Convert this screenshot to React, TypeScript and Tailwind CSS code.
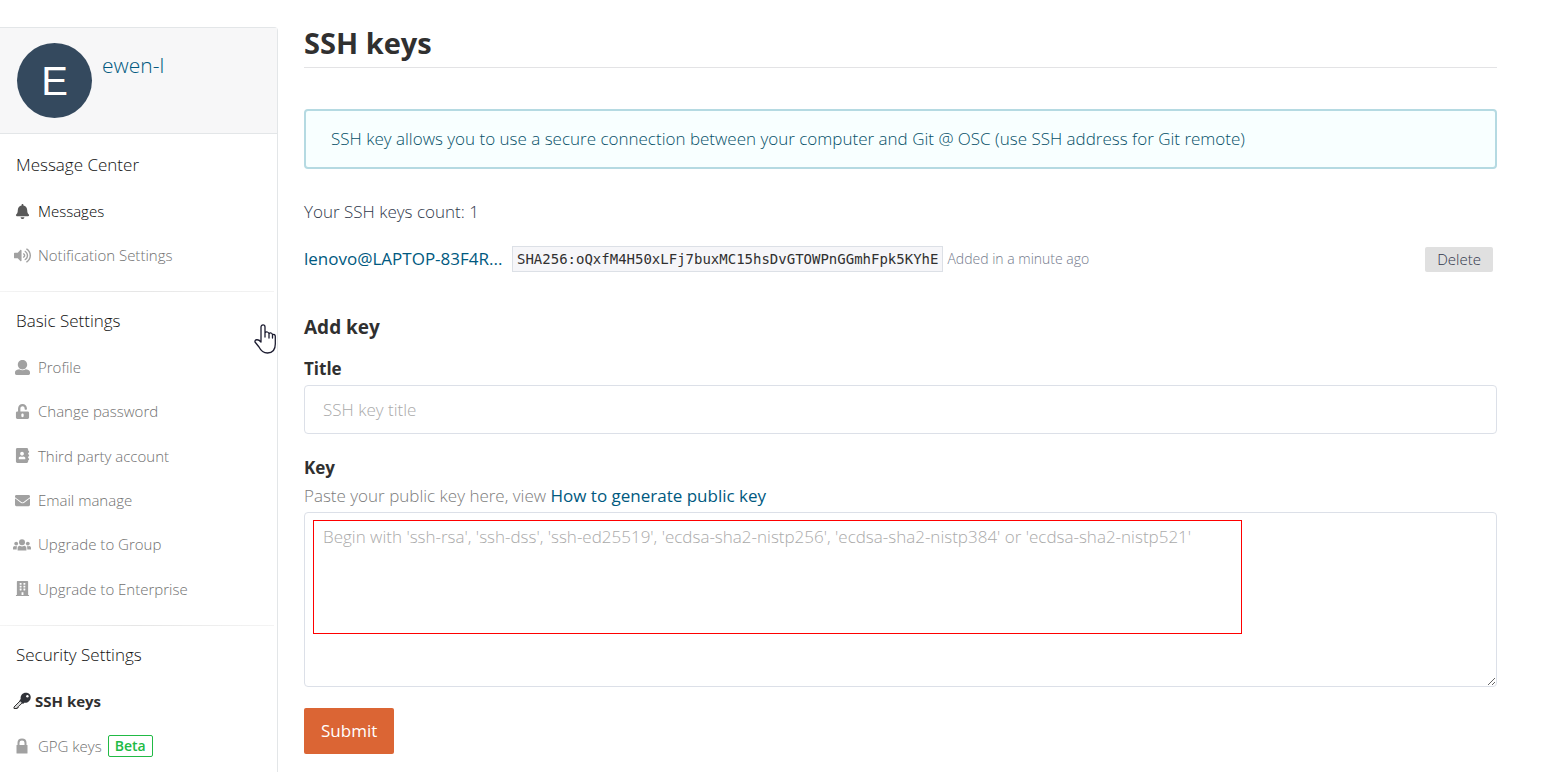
import { ReactNode } from "react";
import { FaAddressBook, FaBell, FaBuilding, FaEnvelope, FaUnlockAlt, FaVolumeUp } from "react-icons/fa";

const UserIcon = () => (
  <svg viewBox="0 0 512 512" fill="currentColor" className="size-[15px]">
    <path d="M256 0c88.366 0 160 71.634 160 160s-71.634 160-160 160S96 248.366 96 160 167.634 0 256 0zm183.283 333.821l-71.313-17.828c-74.923 53.89-165.738 41.864-223.94 0l-71.313 17.828C29.981 344.505 0 382.903 0 426.955V464c0 26.51 21.49 48 48 48h416c26.51 0 48-21.49 48-48v-37.045c0-44.052-29.981-82.45-72.717-93.134z" />
  </svg>
);

const GroupIcon = () => (
  <svg viewBox="0 0 18 12" fill="currentColor" className="h-3 w-[18px] shrink-0">
    <circle cx="9" cy="3.2" r="3" />
    <circle cx="3.2" cy="4.6" r="1.9" />
    <circle cx="14.8" cy="4.6" r="1.9" />
    <path d="M4.6 11.500V9.300C4.600 7.900 5.500 7.100 6.900 6.800C8.200 7.600 9.800 7.600 11.100 6.800C12.500 7.100 13.400 7.900 13.400 9.300V11.500Z" />
    <path d="M0 10.400V8.800C0 7.700 .7 7.100 1.800 6.900C2.500 7.300 3.400 7.300 4.200 6.900C3.900 7.500 3.700 8.300 3.700 10.400ZM18 10.400V8.800C18 7.700 17.300 7.100 16.200 6.900C15.500 7.300 14.600 7.300 13.800 6.900C14.100 7.500 14.300 8.300 14.300 10.400Z" />
  </svg>
);

const LockIcon = () => (
  <svg viewBox="0 0 12 16" className="h-4 w-3">
    <path d="M2.500 8V4.800C2.500 .3 9.500 .3 9.500 4.800V8" fill="none" stroke="currentColor" strokeWidth="2" />
    <rect x="0.500" y="7" width="11" height="8.500" rx="0.500" fill="currentColor" />
  </svg>
);

const KeyIcon = () => (
  <svg viewBox="0 0 18 18" className="size-[18px]">
    <path d="M1 16.500V15L8.200 7.800L10.300 9.900L5.500 14.500V15.300H4.300V16.500Z" fill="#d8d8d8" stroke="#333" strokeWidth="1" />
    <path d="M7.700 7C7.200 3.500 9.500 .8 13 .8C16 .8 17.900 3 17.700 5.500C17.400 9 14.500 11.200 11.300 10.700L10 12L6.400 8.400Z" fill="#303238" />
    <circle cx="14.400" cy="4.200" r="1.200" fill="#fff" />
  </svg>
);

function Item({ icon, label, className = "text-[#707070]" }: { icon: ReactNode; label: string; className?: string }) {
  return (
    <a href="#" className={`flex h-5 items-center gap-[7px] text-[15px] ${className}`}>
      <span className="flex w-[18px] justify-center opacity-65">{icon}</span>
      {label}
    </a>
  );
}

const Divider = () => <div className="mr-[3px] h-px bg-linear-to-r from-[#f4f4f4] via-[#e6e6e6] to-[#f4f4f4]" />;

export default function App() {
  return (
    <div className="flex h-screen overflow-hidden bg-white font-['Open_Sans','Noto_Sans',sans-serif] text-[17px] font-light text-[#30384b]">
      <aside className="relative mt-[27px] w-[278px] shrink-0 rounded-tr-sm border-t border-r border-[#e3e6e8]">
        <header className="flex h-[106px] gap-2.5 border-b border-[#e3e6e8] bg-[#f7f7f8] px-[17px] pt-[15px]">
          <div className="flex size-[75px] items-center justify-center rounded-full bg-[#34495e] font-['Liberation_Sans',sans-serif] text-[40px] font-normal text-white">E</div>
          <a href="#" className="pt-2 text-[21px] leading-7 text-[#005980]">ewen-l</a>
        </header>
        <nav>
          <section className="px-[13px] pt-[19px] pb-[26px]">
            <h2 className="mb-6 pl-[3px] leading-6 text-[#111]">Message Center</h2>
            <div className="flex flex-col gap-6">
              <Item icon={<FaBell size={15} />} label="Messages" className="text-black" />
              <Item icon={<FaVolumeUp size={17} />} label="Notification Settings" />
            </div>
          </section>
          <Divider />
          <section className="px-[13px] pt-[17px] pb-[26px]">
            <h2 className="mb-6 pl-[3px] leading-6 text-[#111]">Basic Settings</h2>
            <div className="flex h-[242px] flex-col justify-between">
              <Item icon={<UserIcon />} label="Profile" />
              <Item icon={<FaUnlockAlt size={15} />} label="Change password" />
              <Item icon={<FaAddressBook size={15} />} label="Third party account" />
              <Item icon={<FaEnvelope size={15} />} label="Email manage" />
              <Item icon={<GroupIcon />} label="Upgrade to Group" />
              <Item icon={<FaBuilding size={15} />} label="Upgrade to Enterprise" />
            </div>
          </section>
          <Divider />
          <section className="px-[13px] pt-[17px]">
            <h2 className="mb-6 pl-[3px] leading-6 text-[#111]">Security Settings</h2>
            <div className="flex flex-col gap-6">
              <a href="#" className="flex h-5 items-center gap-1 text-[15px] font-bold text-[#303030]"><KeyIcon />SSH keys</a>
              <div className="flex items-center gap-1.5">
                <Item icon={<LockIcon />} label="GPG keys" />
                <span className="flex h-[22px] items-center rounded-xs border border-[#21ba45] px-1.5 text-sm font-semibold text-[#21ba45]">Beta</span>
              </div>
            </div>
          </section>
        </nav>
        <svg viewBox="0 0 22 30" className="absolute top-[296px] right-px h-[30px] w-[22px]" fill="#fff" stroke="#1c1c30" strokeWidth="1.300" strokeLinejoin="round">
          <path d="M7 18V3C7 .2 11 .2 11 3V9V13V9C12 7 15 8 15 10V14V10C16 8 18.500 9 18.500 11V14V11C20 9.500 21.300 11 21.300 12.500V20C21.300 25 19 29 13.500 29C9 29 6.500 26 5 23L1 18C.5 15.500 4 14.500 7 18Z" />
        </svg>
      </aside>
      <main className="min-w-0 flex-1 pt-[23px] pr-[52px] pl-[26px]">
        <h1 className="border-b border-[#e3e3e5] pb-1 text-[29px] leading-10 font-bold text-[#303030]">SSH keys</h1>
        <p className="mt-[41px] rounded-sm border-2 border-[#b5dae2] bg-[#f8ffff] px-[25px] py-4 leading-6 text-[#055068]">SSH key allows you to use a secure connection between your computer and Git @ OSC (use SSH address for Git remote)</p>
        <p className="mt-[31px] leading-6">Your SSH keys count: 1</p>
        <div className="mt-[22px] flex h-[26px] items-center pr-1">
          <a href="#" className="w-[208px] font-normal text-[#005980]">lenovo@LAPTOP-83F4R...</a>
          <code className="flex h-[26px] items-center border border-[#dce0e6] bg-[#f6f6f9] px-1 font-['DejaVu_Sans_Mono',monospace] text-sm font-normal text-[#303030]">SHA256:oQxfM4H50xLFj7buxMC15hsDvGTOWPnGGmhFpk5KYhE</code>
          <span className="ml-1 text-sm text-[#747a8c]">Added in a minute ago</span>
          <button className="ml-auto h-[25px] rounded-xs bg-[#e0e0e0] px-3 text-[15px]">Delete</button>
        </div>
        <form onSubmit={(e) => e.preventDefault()} className="pt-[41px]">
          <h2 className="text-[19px] leading-7 font-bold text-[#303030]">Add key</h2>
          <label htmlFor="title" className="mt-4 block leading-6 font-bold text-[#303030]">Title</label>
          <input id="title" placeholder="SSH key title" className="mt-1 block h-[49px] w-full rounded-sm border border-[#dce0e8] px-[18px] placeholder:text-[#aaa]" />
          <label htmlFor="key" className="mt-[22px] block leading-6 font-bold text-[#303030]">Key</label>
          <p className="mt-1 mb-1 leading-6 text-[#7c7c7c]">Paste your public key here, view <a href="#" className="font-normal text-[#005980]">How to generate public key</a></p>
          <div className="relative">
            <textarea id="key" placeholder="Begin with 'ssh-rsa', 'ssh-dss', 'ssh-ed25519', 'ecdsa-sha2-nistp256', 'ecdsa-sha2-nistp384' or 'ecdsa-sha2-nistp521'" className="block h-[175px] w-full resize-y rounded-sm border border-[#dce0e8] px-[18px] py-3 leading-6 placeholder:text-[#aaa]" />
            <div className="pointer-events-none absolute top-2 left-[9px] h-[114px] w-[929px] border border-[#f00]" />
          </div>
          <button className="mt-[21px] h-[46px] rounded-xs bg-[#db6534] px-[17px] font-normal text-white">Submit</button>
        </form>
      </main>
    </div>
  );
}
